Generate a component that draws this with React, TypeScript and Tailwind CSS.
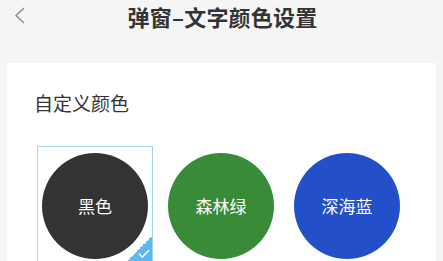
import { Check } from "lucide-react";

const colors = [
  { name: "黑色", bg: "bg-[#333333]", selected: true },
  { name: "森林绿", bg: "bg-[#3a8b37]", selected: false },
  { name: "深海蓝", bg: "bg-[#2350c9]", selected: false },
];

export default function App() {
  return (
    <div className="h-[261px] w-[443px] overflow-hidden bg-[#f5f5f5] font-['Noto_Sans_CJK_SC',sans-serif] text-[#333]">
      {/* header */}
      <div className="relative flex h-[32px] items-center justify-center">
        <svg
          className="absolute left-[14px] top-[7px]"
          width="12"
          height="17"
          viewBox="0 0 12 17"
          fill="none"
          stroke="#8a8a8a"
          strokeWidth="1.4"
        >
          <path d="M10 1 L2 8.5 L10 16" />
        </svg>
        <h1 className="ml-[2px] text-[22px] font-bold leading-none tracking-[0.2px]">弹窗–文字颜色设置</h1>
      </div>

      {/* card */}
      <div className="mx-[7px] mt-[31px] h-[300px] bg-white px-[30px] pt-[30px]">
        <p className="ml-[-3px] text-[19px] leading-none">自定义颜色</p>
        <div className="mt-[34px] flex gap-[10px]">
          {colors.map((c) => (
            <div
              key={c.name}
              className={`relative flex h-[117px] w-[116px] items-center justify-center border ${
                c.selected ? "border-[#9fd6ea]" : "border-transparent"
              }`}
            >
              <div
                className={`mt-[2px] flex h-[106px] w-[106px] items-center justify-center rounded-full ${c.bg} text-[17px] text-white`}
              >
                {c.name}
              </div>
              {c.selected && (
                <div className="absolute bottom-0 right-0 h-[26px] w-[26px] bg-[linear-gradient(135deg,transparent_50%,#5bb9f0_50%)]">
                  <Check className="absolute bottom-[1px] right-[1px] h-[14px] w-[14px] text-white" strokeWidth={2.5} />
                </div>
              )}
            </div>
          ))}
        </div>
      </div>
    </div>
  );
}
